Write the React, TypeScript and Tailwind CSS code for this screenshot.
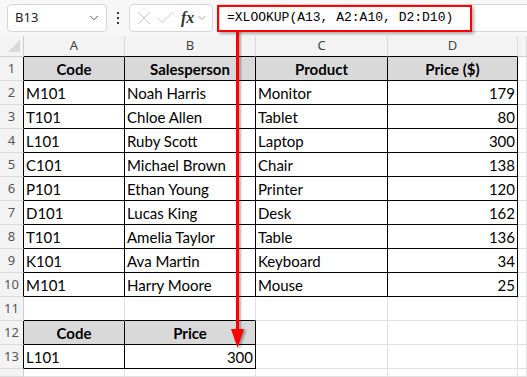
import { Check, ChevronDown, X } from "lucide-react";

type Cell = { t: string; align?: "l" | "c" | "r"; bold?: boolean };

const letters = ["A", "B", "C", "D", ""];

const sales: [string, string, string, number][] = [
  ["M101", "Noah Harris", "Monitor", 179],
  ["T101", "Chloe Allen", "Tablet", 80],
  ["L101", "Ruby Scott", "Laptop", 300],
  ["C101", "Michael Brown", "Chair", 138],
  ["P101", "Ethan Young", "Printer", 120],
  ["D101", "Lucas King", "Desk", 162],
  ["T101", "Amelia Taylor", "Table", 136],
  ["K101", "Ava Martin", "Keyboard", 34],
  ["M101", "Harry Moore", "Mouse", 25],
];

// rows 1..14, cols A..E
function buildRows(): (Cell | null)[][] {
  const rows: (Cell | null)[][] = [];
  rows.push([
    { t: "Code", align: "c", bold: true },
    { t: "Salesperson", align: "c", bold: true },
    { t: "Product", align: "c", bold: true },
    { t: "Price ($)", align: "c", bold: true },
    null,
  ]);
  for (const [code, name, prod, price] of sales) {
    rows.push([{ t: code }, { t: name }, { t: prod }, { t: String(price), align: "r" }, null]);
  }
  rows.push([null, null, null, null, null]);
  rows.push([{ t: "Code", align: "c", bold: true }, { t: "Price", align: "c", bold: true }, null, null, null]);
  rows.push([{ t: "L101" }, { t: "300", align: "r" }, null, null, null]);
  rows.push([null, null, null, null, null]);
  return rows;
}

const rows = buildRows();

// is (row 1-based, col 1-based A=1) inside a bordered table
function inTable(r: number, c: number) {
  if (r >= 1 && r <= 10 && c >= 1 && c <= 4) return true;
  if (r >= 12 && r <= 13 && c >= 1 && c <= 2) return true;
  return false;
}

function isHeaderFill(r: number, c: number) {
  return (r === 1 && c >= 1 && c <= 4) || (r === 12 && c >= 1 && c <= 2);
}

const font = { fontFamily: "Lato, 'Liberation Sans', sans-serif" };
const uiFont = { fontFamily: "'Noto Sans', 'Liberation Sans', sans-serif" };

export default function App() {
  return (
    <div className="relative flex h-[377px] w-[527px] flex-col overflow-hidden bg-white">
      {/* formula bar */}
      <div className="flex h-[36px] shrink-0 items-start bg-[#f7f7f7] pl-[7px] pt-[4px]" style={uiFont}>
        <div className="flex h-[28px] w-[100px] items-center justify-between rounded-[4px] border border-[#d6d6d6] bg-white pl-[7px] pr-[5px]">
          <span className="text-[13px] text-[#222]">B13</span>
          <ChevronDown className="h-[14px] w-[14px] text-[#444]" strokeWidth={1.6} />
        </div>
        <div className="flex h-[28px] w-[22px] flex-col items-center justify-center gap-[3px]">
          <span className="h-[2px] w-[2px] bg-[#333]" />
          <span className="h-[2px] w-[2px] bg-[#333]" />
          <span className="h-[2px] w-[2px] bg-[#333]" />
        </div>
        <div className="flex h-[28px] w-[84px] items-center rounded-[4px] border border-[#d6d6d6] bg-white pl-[3px]">
          <X className="h-[22px] w-[22px] text-[#c4c4c4]" strokeWidth={1} />
          <Check className="ml-[-1px] h-[22px] w-[22px] text-[#c4c4c4]" strokeWidth={1} />
          <span
            className="ml-[5px] text-[16px] font-bold italic text-[#333]"
            style={{ fontFamily: "'Liberation Serif', serif" }}
          >
            fx
          </span>
          <ChevronDown className="ml-[2px] h-[12px] w-[12px] text-[#888]" strokeWidth={1.6} />
        </div>
        <div className="ml-[6px] flex h-[28px] flex-1 items-center rounded-l-[4px] border border-r-0 border-[#d6d6d6] bg-white">
          <div
            className="ml-[-3px] flex h-[27px] w-[255px] items-center border-2 border-[#f00] pl-[8px] text-[13px] text-black shadow-[2px_2px_3px_rgba(0,0,0,0.3)]"
            style={{ fontFamily: "'Liberation Mono', monospace" }}
          >
            =XLOOKUP(A13, A2:A10, D2:D10)
          </div>
        </div>
      </div>

      {/* sheet */}
      <div className="grid flex-1 grid-cols-[24px_101px_131px_132px_130px_1fr] grid-rows-[21px_repeat(13,24px)_1fr]">
        {/* column headers */}
        <div className="relative border-b border-r border-[#cfcfcf] bg-[#f3f3f3]">
          <svg className="absolute left-[8px] top-[4px]" width="12" height="12" viewBox="0 0 12 12">
            <polygon points="12,0 12,12 0,12" fill="#d9d9d9" />
          </svg>
        </div>
        {letters.map((l, i) => (
          <div
            key={"h" + i}
            className={`flex items-center justify-center border-b border-r bg-[#f3f3f3] text-[13px] text-[#444] ${
              inTable(1, i + 1) ? "border-b-black" : "border-b-[#cfcfcf]"
            } border-r-[#dcdcdc]`}
            style={uiFont}
          >
            {l}
          </div>
        ))}

        {rows.map((row, ri) => {
          const r = ri + 1;
          return [
            <div
              key={"n" + r}
              className={`flex items-center justify-center border-b border-r border-b-[#dcdcdc] bg-[#f3f3f3] text-[13px] text-[#555] ${
                inTable(r, 1) ? "border-r-black" : "border-r-[#cfcfcf]"
              }`}
              style={uiFont}
            >
              {r <= 13 ? r : ""}
            </div>,
            ...row.map((cell, ci) => {
              const c = ci + 1;
              const rb = inTable(r, c) || inTable(r, c + 1) ? "border-r-black" : "border-r-[#e1e1e1]";
              const bb = inTable(r, c) || inTable(r + 1, c) ? "border-b-black" : "border-b-[#e1e1e1]";
              const bg = isHeaderFill(r, c) ? "bg-[#d9d9d9]" : "bg-white";
              const align =
                cell?.align === "c" ? "justify-center" : cell?.align === "r" ? "justify-end" : "justify-start";
              return (
                <div
                  key={r + "-" + c}
                  className={`flex items-end overflow-hidden whitespace-nowrap border-b border-r px-[2px] pb-[1px] text-[15px] leading-[19px] text-black ${rb} ${bb} ${bg} ${align} ${
                    cell?.bold ? "font-bold" : ""
                  }`}
                  style={font}
                >
                  {cell?.t}
                </div>
              );
            }),
          ];
        })}
      </div>

      {/* annotation arrow */}
      <div className="absolute left-[236px] top-[31px] h-[300px] w-[3px] bg-[#f00] shadow-[2px_1px_2px_rgba(0,0,0,0.3)]" />
      <svg
        className="absolute left-[231px] top-[329px] drop-shadow-[2px_1px_1px_rgba(0,0,0,0.35)]"
        width="13"
        height="19"
        viewBox="0 0 13 19"
      >
        <polygon points="0,0 13,0 6.5,19" fill="#f00" />
      </svg>
    </div>
  );
}
